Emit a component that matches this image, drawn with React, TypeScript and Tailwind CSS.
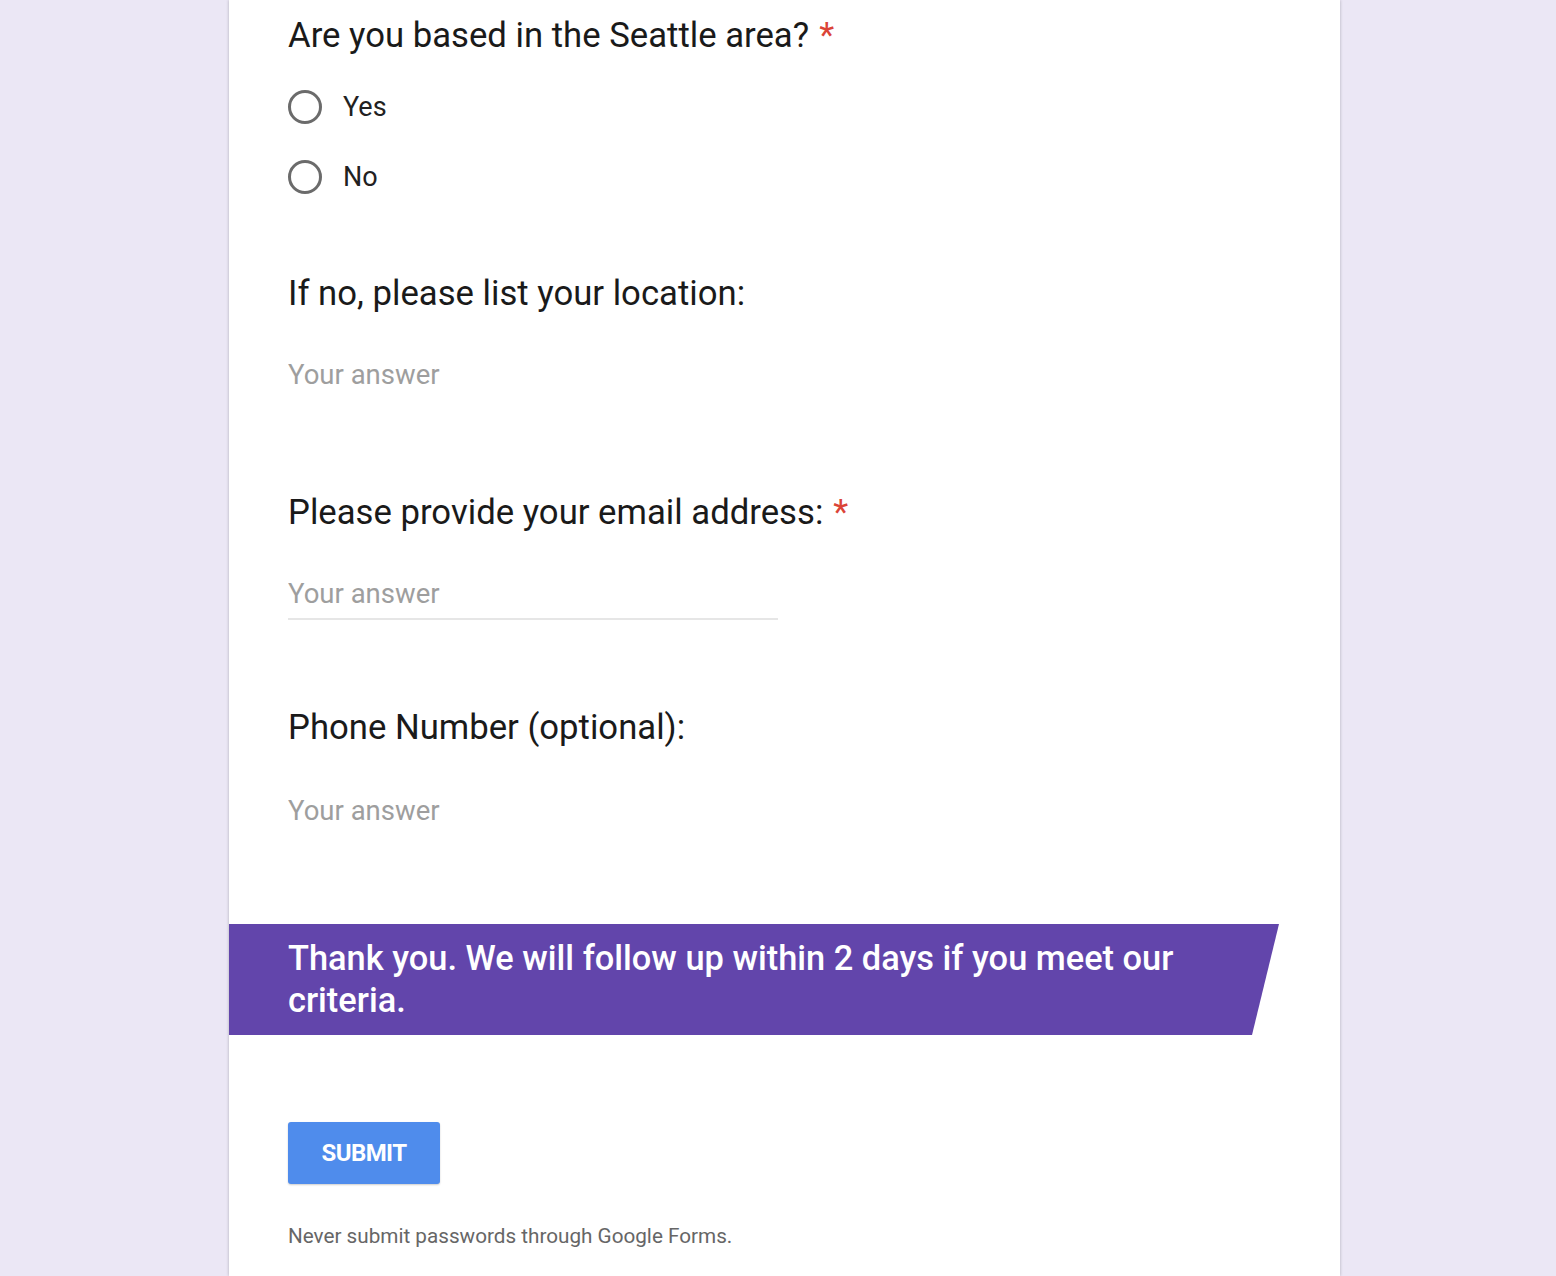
import { useState } from 'react';

const font = { fontFamily: 'Roboto, "Liberation Sans", sans-serif' };

function Required() {
  return <span className="text-[#db4437] ml-[10px]">*</span>;
}

function AnswerField({ underline }: { underline?: boolean }) {
  const [value, setValue] = useState('');
  return (
    <div
      className={`w-[490px] pb-[8px] ${underline ? 'border-b-[2px] border-[#e6e6e6]' : ''}`}
    >
      <input
        type="text"
        value={value}
        onChange={(e) => setValue(e.target.value)}
        placeholder="Your answer"
        className="w-full h-[32px] text-[27.5px] leading-[32px] text-[#212121] placeholder:text-[#9e9e9e] outline-none bg-transparent"
        style={font}
      />
    </div>
  );
}

export default function App() {
  const [based, setBased] = useState<string | null>(null);

  return (
    <div className="min-h-screen bg-[#ebe7f5]" style={font}>
      <div className="ml-[229px] w-[1111px] min-h-screen bg-white shadow-[0_0_3px_rgba(0,0,0,0.25)] pt-[15px] pb-[20px]">
        <div className="pl-[59px]">
          <h2 className="text-[34.7px] leading-[40px] text-[#1a1a1a]">
            Are you based in the Seattle area?
            <Required />
          </h2>
          <div className="mt-[32px] flex flex-col gap-[30px]">
            {['Yes', 'No'].map((opt) => (
              <label key={opt} className="flex items-center h-[40px] cursor-pointer">
                <span
                  onClick={() => setBased(opt)}
                  className="w-[34px] h-[34px] rounded-full border-[3px] border-[#6b6b6b] flex items-center justify-center"
                >
                  {based === opt && <span className="w-[16px] h-[16px] rounded-full bg-[#673ab7]" />}
                </span>
                <span className="ml-[21px] text-[27px] text-[#212121]">{opt}</span>
              </label>
            ))}
          </div>

          <h2 className="mt-[76px] text-[34.7px] leading-[40px] text-[#1a1a1a]">
            If no, please list your location:
          </h2>
          <div className="mt-[46px]">
            <AnswerField />
          </div>

          <h2 className="mt-[93px] text-[34.7px] leading-[40px] text-[#1a1a1a]">
            Please provide your email address:
            <Required />
          </h2>
          <div className="mt-[46px]">
            <AnswerField underline />
          </div>

          <h2 className="mt-[87px] text-[34.7px] leading-[40px] text-[#1a1a1a]">
            Phone Number (optional):
          </h2>
          <div className="mt-[48px]">
            <AnswerField />
          </div>
        </div>

        <div className="mt-[89px] w-[1050px] bg-[#6245ab] pl-[59px] pr-[100px] pt-[13px] pb-[14px] [clip-path:polygon(0_0,100%_0,calc(100%-27px)_100%,0_100%)]">
          <p className="text-[34.4px] leading-[42px] text-white font-medium">
            Thank you. We will follow up within 2 days if you meet our criteria.
          </p>
        </div>

        <div className="pl-[59px]">
          <button className="mt-[87px] w-[152px] h-[62px] rounded-[3px] bg-[#4f8cec] text-white text-[24px] font-bold tracking-tight shadow-[0_1px_2px_rgba(0,0,0,0.2)]">
            SUBMIT
          </button>
          <p className="mt-[40px] text-[20.7px] leading-[24px] text-[#666666]">
            Never submit passwords through Google Forms.
          </p>
        </div>
      </div>
    </div>
  );
}
